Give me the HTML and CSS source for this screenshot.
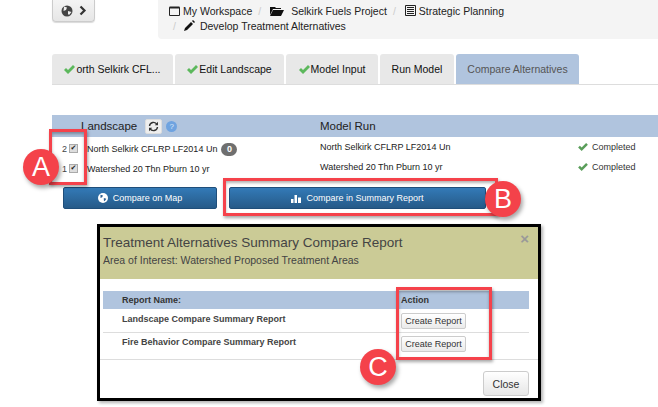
FILE: index.html
```html
<!DOCTYPE html>
<html lang="en">
<head>
  <meta charset="UTF-8">
  <title>Compare Alternatives</title>
  <link rel="stylesheet" href="styles.css">
</head>
<body>
  <div class="topbar">
    <button class="nav-btn">
      <svg width="12" height="12" viewBox="0 0 12 12"><circle cx="6" cy="6" r="5.5" fill="#444"/><path d="M3 1.5l3 1-1 2.5-2.5 1zM7 6l3.5 1-2.5 3-1-1z" fill="#eee"/></svg>
      <svg width="8" height="11" viewBox="0 0 8 11"><path d="M1.5 1.5l4 4-4 4" fill="none" stroke="#333" stroke-width="2.2"/></svg>
    </button>
    <div class="crumbs">
      <div class="crumb-line">
        <svg width="11" height="10" viewBox="0 0 11 10"><path d="M.5 1.5h10v8H.5z" fill="none" stroke="#222"/><path d="M.5 1.5h10" stroke="#222" stroke-width="2"/></svg>
        <span>My Workspace</span>
        <span class="sep">/</span>
        <svg class="folder" width="14" height="10" viewBox="0 0 14 10"><path d="M0 1h5l1 1h5v1H3L0 9zM3 4h11l-3 6H0z" fill="#111"/></svg>
        <span>Selkirk Fuels Project</span>
        <span class="sep">/</span>
        <svg width="11" height="11" viewBox="0 0 11 11"><path d="M.5.5h10v10H.5z" fill="none" stroke="#222"/><path d="M2 2.5h7M2 4.5h7M2 6.5h7M2 8.5h7" stroke="#222"/></svg>
        <span>Strategic Planning</span>
      </div>
      <div class="crumb-line second">
        <span class="sep">/</span>
        <svg width="11" height="11" viewBox="0 0 11 11"><path d="M0 11l1-3 6-6 2 2-6 6zM8 1l1-1 2 2-1 1z" fill="#111"/></svg>
        <span>Develop Treatment Alternatives</span>
      </div>
    </div>
  </div>

  <div class="tabs">
    <div class="tab tab-first"><svg class="check" width="11" height="9" viewBox="0 0 11 9"><path d="M0 5l2-2 2 2 5-5 2 2-7 7z" fill="#5cb85c"/></svg>orth Selkirk CFL...</div>
    <div class="tab tab-edit"><svg class="check" width="11" height="9" viewBox="0 0 11 9"><path d="M0 5l2-2 2 2 5-5 2 2-7 7z" fill="#5cb85c"/></svg>Edit Landscape</div>
    <div class="tab tab-input"><svg class="check" width="11" height="9" viewBox="0 0 11 9"><path d="M0 5l2-2 2 2 5-5 2 2-7 7z" fill="#5cb85c"/></svg>Model Input</div>
    <div class="tab tab-run">Run Model</div>
    <div class="tab tab-active">Compare Alternatives</div>
  </div>

  <div class="grid-head">
    <div class="head-land">Landscape
      <span class="refresh"><svg width="11" height="11" viewBox="0 0 11 11"><path d="M1.5 5A4 4 0 0 1 9 3.5M9.5 6A4 4 0 0 1 2 7.5" fill="none" stroke="#333" stroke-width="1.4"/><path d="M10 .8v3.5H6.8zM1 10.2V6.7h3.2z" fill="#333"/></svg></span>
      <span class="help">?</span>
    </div>
    <div>Model Run</div>
  </div>

  <div class="grid-row row-one">
    <div class="land-cell">
      <span class="num">2</span><span class="box">✔</span>
      <span class="land">North Selkirk CFLRP LF2014 Un</span><span class="badge">0</span>
    </div>
    <span class="run">North Selkirk CFLRP LF2014 Un</span>
    <span class="run status"><svg class="check-small" width="10" height="8" viewBox="0 0 11 9"><path d="M0 5l2-2 2 2 5-5 2 2-7 7z" fill="#5a9e5a"/></svg>Completed</span>
  </div>
  <div class="grid-row">
    <div class="land-cell">
      <span class="num">1</span><span class="box">✔</span>
      <span class="land">Watershed 20 Thn Pburn 10 yr</span>
    </div>
    <span class="run">Watershed 20 Thn Pburn 10 yr</span>
    <span class="run status"><svg class="check-small" width="10" height="8" viewBox="0 0 11 9"><path d="M0 5l2-2 2 2 5-5 2 2-7 7z" fill="#5a9e5a"/></svg>Completed</span>
  </div>

  <div class="actions">
    <button class="primary map-btn">
      <svg width="10" height="10" viewBox="0 0 12 12"><circle cx="6" cy="6" r="6" fill="#fff"/><path d="M3 2l3 1-1 2-2 1zM7 6l3 1-2 3-1-1z" fill="#2c5f93"/></svg>
      Compare on Map
    </button>
    <button class="primary report-btn">
      <svg width="10" height="9" viewBox="0 0 10 9"><path d="M0 5h2.5v4H0zM3.5 1H6v8H3.5zM7 3.5h3V9H7z" fill="#fff"/></svg>
      Compare in Summary Report
    </button>
  </div>

  <div class="modal">
    <div class="modal-head">
      <span class="modal-x">×</span>
      <h3>Treatment Alternatives Summary Compare Report</h3>
      <p>Area of Interest: Watershed Proposed Treatment Areas</p>
    </div>
    <div class="modal-body">
      <div class="report-head"><span class="report-name">Report Name:</span><span class="report-action">Action</span></div>
      <div class="report-row"><span class="report-name">Landscape Compare Summary Report</span><button class="create">Create Report</button></div>
      <div class="report-row"><span class="report-name">Fire Behavior Compare Summary Report</span><button class="create">Create Report</button></div>
    </div>
    <div class="modal-foot"><button class="close">Close</button></div>
  </div>

  <div class="mark mark-a"></div>
  <div class="mark mark-b"></div>
  <div class="mark mark-c"></div>
  <div class="dot dot-a">A</div>
  <div class="dot dot-b">B</div>
  <div class="dot dot-c">C</div>
</body>
</html>
```

FILE: styles.css
```css
html, body {
  height: 407px;
  overflow: hidden;
}
body {
  margin: 0;
  padding-left: 52px;
  position: relative;
  font-family: "Liberation Sans", Arial, sans-serif;
  font-size: 10px;
  color: #222;
  background: #fff;
}
button {
  font-family: inherit;
}
.topbar {
  display: flex;
  height: 39px;
}
.nav-btn {
  width: 43px;
  height: 22px;
  padding: 0;
  display: flex;
  align-items: center;
  justify-content: center;
  gap: 6px;
  border: 1px solid #ccc;
  border-top: 0;
  border-radius: 0 0 4px 4px;
  background: linear-gradient(#f4f4f4, #e6e6e6);
  box-shadow: 0 1px 1px rgba(0,0,0,.15);
}
.crumbs {
  margin-left: 63px;
  flex: 1;
  padding-top: 3px;
  background: #f4f4f4;
  border-radius: 0 0 0 4px;
  font-size: 10.5px;
  color: #222;
}
.crumb-line {
  display: flex;
  align-items: center;
  height: 15px;
  padding-left: 11px;
  gap: 3px;
}
.crumb-line.second {
  padding-left: 15px;
  gap: 5px;
}
.sep {
  color: #ccc;
  margin: 0 6px 0 3px;
}
.second .sep {
  margin: 0 3px 0 0;
}
.folder {
  margin-right: 4px;
}
.tabs {
  display: flex;
  gap: 2px;
  margin-top: 15px;
  height: 31px;
  box-sizing: border-box;
  border-bottom: 1px solid #ddd;
  font-size: 10.5px;
}
.tab {
  display: flex;
  align-items: center;
  justify-content: center;
  background: #e8e8e8;
  border-radius: 3px 3px 0 0;
  color: #111;
}
.tab-first { width: 121px; }
.tab-edit { width: 109px; }
.tab-input { width: 92px; }
.tab-run { width: 74px; }
.tab-active {
  width: 123px;
  background: #b0c4de;
  color: #555;
}
.check {
  margin-right: 1px;
}
.check-small {
  margin-right: 4px;
}
.grid-head {
  margin-top: 30px;
  height: 22px;
  display: flex;
  align-items: center;
  background: #b0c4de;
  font-size: 11.5px;
  color: #222;
}
.head-land {
  width: 268px;
  padding-left: 29px;
  box-sizing: border-box;
  display: flex;
  align-items: center;
}
.refresh {
  width: 17px;
  height: 15px;
  margin-left: 8px;
  box-sizing: border-box;
  display: flex;
  align-items: center;
  justify-content: center;
  background: #eee;
  border: 1px solid #ddd;
  border-radius: 2px;
}
.help {
  width: 11px;
  height: 11px;
  margin-left: 4px;
  border-radius: 50%;
  background: #6fa3e0;
  color: #dce8f8;
  font-size: 8px;
  line-height: 11px;
  text-align: center;
}
.grid-row {
  display: grid;
  grid-template-columns: 268px 258px 1fr;
  align-items: center;
  height: 20px;
  font-size: 9px;
  color: #222;
}
.row-one {
  margin-top: 2px;
}
.land-cell {
  display: flex;
  align-items: center;
}
.run {
  padding-bottom: 5px;
}
.status {
  display: flex;
  align-items: center;
  color: #333;
}
.num {
  width: 15px;
  text-align: right;
  color: #444;
}
.box {
  width: 7px;
  height: 7px;
  margin: -2px 0 0 2px;
  border: 1px solid #aaa;
  background: #ddd;
  font-size: 7px;
  line-height: 7px;
  text-align: center;
  font-family: "DejaVu Sans", sans-serif;
}
.land {
  margin-left: 9px;
}
.badge {
  margin: 1px 0 0 4px;
  width: 16px;
  height: 13px;
  border-radius: 7px;
  background: #6f6f6f;
  color: #fff;
  font-size: 9px;
  font-weight: bold;
  line-height: 13px;
  text-align: center;
}
.actions {
  display: flex;
  gap: 12px;
  margin: 8px 0 0 11px;
}
.primary {
  height: 22px;
  padding: 0;
  display: flex;
  align-items: center;
  justify-content: center;
  gap: 5px;
  border: 1px solid #1f4e7a;
  border-radius: 2px;
  background: linear-gradient(#337ab7, #265a88);
  color: #fff;
  font-size: 9px;
}
.map-btn { width: 154px; }
.report-btn { width: 257px; }
.modal {
  position: absolute;
  left: 97px;
  top: 224px;
  width: 438px;
  height: 171px;
  border: 3px solid #000;
  background: #fff;
  box-shadow: 2px 2px 3px rgba(0,0,0,.3);
}
.modal-head {
  height: 52px;
  padding: 8px 3px 0;
  box-sizing: border-box;
  background: #cbcb96;
  position: relative;
  color: #444;
}
.modal-head h3 {
  margin: 0;
  font-size: 13.5px;
  font-weight: normal;
  line-height: 16px;
}
.modal-head p {
  margin: 3px 0 0;
  font-size: 10.5px;
  line-height: 13px;
}
.modal-x {
  position: absolute;
  right: 9px;
  top: 3px;
  font-size: 15px;
  font-weight: bold;
  color: #999;
}
.modal-body {
  margin: 12px 9px 0 3px;
  font-size: 9px;
  font-weight: bold;
  color: #444;
}
.report-head {
  display: flex;
  align-items: center;
  height: 18px;
  background: #b0c4de;
  color: #333;
}
.report-name {
  width: 280px;
  margin-left: 19px;
  line-height: 12px;
}
.report-action {
  margin-left: -1px;
}
.report-row {
  display: flex;
  align-items: flex-start;
  box-sizing: border-box;
  height: 23px;
  padding-top: 4px;
}
.report-row + .report-row {
  height: 27px;
  padding-top: 3px;
  border-top: 1px solid #ddd;
}
.create {
  width: 65px;
  height: 16px;
  padding: 0;
  margin-left: -1px;
  border: 1px solid #ccc;
  border-radius: 2px;
  background: linear-gradient(#fff, #eaeaea);
  font-size: 9px;
  color: #333;
}
.modal-foot {
  border-top: 1px solid #ddd;
  padding: 11px 9px 0 0;
  display: flex;
  justify-content: flex-end;
}
.close {
  width: 46px;
  height: 25px;
  padding: 0;
  border: 1px solid #ccc;
  border-radius: 3px;
  background: linear-gradient(#fff, #e6e6e6);
  font-size: 10.5px;
  color: #333;
}
.mark {
  position: absolute;
  border: 3px solid #f5424b;
  box-shadow: 1px 2px 3px rgba(0,0,0,.35), inset 0 2px 3px rgba(0,0,0,.3);
  box-sizing: border-box;
}
.mark-a { left: 49px; top: 129px; width: 38px; height: 56px; }
.mark-b { left: 223px; top: 178px; width: 275px; height: 38px; }
.mark-c { left: 396px; top: 287px; width: 96px; height: 73px; }
.dot {
  position: absolute;
  width: 36px;
  height: 36px;
  border-radius: 50%;
  background: #f4424a;
  color: #fff;
  font-size: 27px;
  line-height: 36px;
  text-align: center;
  box-shadow: 2px 3px 4px rgba(0,0,0,.35);
}
.dot-a { left: 23px; top: 149px; }
.dot-b { left: 485px; top: 181px; }
.dot-c { left: 360px; top: 349px; }
```
